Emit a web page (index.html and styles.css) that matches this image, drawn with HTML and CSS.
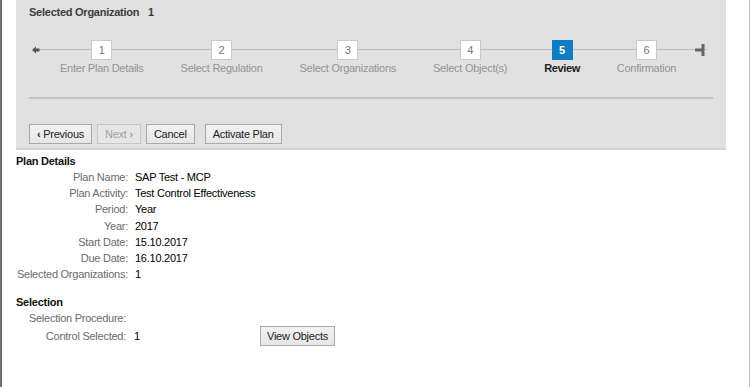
FILE: index.html
```html
<!DOCTYPE html>
<html lang="en">
<head>
    <meta charset="UTF-8">
    <title>Plan Wizard - Review</title>
    <link rel="stylesheet" href="styles.css">
</head>
<body>
    <div class="page">
        <div class="panel">
            <div class="title">Selected Organization <span class="title-count">1</span></div>

            <!-- roadmap -->
            <div class="roadmap">
                <span class="rm-start">
                    <svg width="8" height="8" viewBox="0 0 8 8"><polygon points="0,4 4,0.5 4,2.5 7.5,2.5 7.5,5.5 4,5.5 4,7.5" fill="#555"/></svg>
                </span>
                <ol class="steps">
                    <li class="step"><span class="num">1</span><span class="label">Enter Plan Details</span></li>
                    <li class="step"><span class="num">2</span><span class="label">Select Regulation</span></li>
                    <li class="step"><span class="num">3</span><span class="label">Select Organizations</span></li>
                    <li class="step"><span class="num">4</span><span class="label">Select Object(s)</span></li>
                    <li class="step active"><span class="num">5</span><span class="label">Review</span></li>
                    <li class="step"><span class="num">6</span><span class="label">Confirmation</span></li>
                </ol>
                <span class="rm-end">
                    <svg width="10" height="12" viewBox="0 0 10 12"><rect x="0" y="4.5" width="7" height="3" fill="#666"/><rect x="6.5" y="0" width="3" height="12" fill="#666"/></svg>
                </span>
            </div>

            <div class="separator"></div>

            <div class="toolbar">
                <button class="btn"><b>&#8249;</b> Previous</button>
                <button class="btn" disabled>Next <b>&#8250;</b></button>
                <button class="btn">Cancel</button>
                <button class="btn btn-spaced">Activate Plan</button>
            </div>
        </div>

        <div class="section">
            <div class="section-title">Plan Details</div>
            <div class="details">
                <span class="lbl">Plan Name:</span><span class="val">SAP Test - MCP</span>
                <span class="lbl">Plan Activity:</span><span class="val">Test Control Effectiveness</span>
                <span class="lbl">Period:</span><span class="val">Year</span>
                <span class="lbl">Year:</span><span class="val">2017</span>
                <span class="lbl">Start Date:</span><span class="val">15.10.2017</span>
                <span class="lbl">Due Date:</span><span class="val">16.10.2017</span>
                <span class="lbl">Selected Organizations:</span><span class="val">1</span>
            </div>
        </div>

        <div class="section section-selection">
            <div class="section-title">Selection</div>
            <div class="selection">
                <span class="lbl">Selection Procedure:</span><span class="val"></span><span></span>
                <span class="lbl">Control Selected:</span><span class="val">1</span><span><button class="btn">View Objects</button></span>
            </div>
        </div>
    </div>
</body>
</html>
```

FILE: styles.css
```css
html, body {
    margin: 0;
    padding: 0;
    background: #ffffff;
}

body {
    font-family: "Liberation Sans", Arial, sans-serif;
    font-size: 11px;
    letter-spacing: -0.25px;
    color: #000000;
}

.page {
    width: 747px;
    height: 387px;
    border-left: 2px solid #6f6f6f;
    border-right: 1px solid #bdbdbd;
    box-sizing: content-box;
}

.panel {
    margin-left: 14px;
    width: 710px;
    height: 150px;
    box-sizing: border-box;
    padding: 5px 13px 0 13px;
    background-color: #e1e1e1;
    border-bottom: 2px solid #d2d2d2;
}

.title {
    font-weight: bold;
    color: #3c3c3c;
    line-height: 14px;
}

.title-count {
    margin-left: 6px;
}

/* roadmap */
.roadmap {
    position: relative;
    display: flex;
    align-items: flex-start;
    margin-top: 21px;
}

.roadmap::before {
    content: "";
    position: absolute;
    left: 8px;
    right: 6px;
    top: 9px;
    border-top: 1px solid #bdbdbd;
}

.rm-start {
    position: relative;
    display: flex;
    margin: 6px 0 0 3px;
}

.rm-end {
    position: relative;
    display: flex;
    margin: 4px 0 0 19px;
}

.steps {
    position: relative;
    display: flex;
    gap: 37px;
    list-style: none;
    margin: 0 0 0 20px;
    padding: 0;
}

.step {
    display: flex;
    flex-direction: column;
    align-items: center;
}

.num {
    width: 21px;
    height: 20px;
    box-sizing: border-box;
    border: 1px solid #c9c9c9;
    background: #ffffff;
    color: #777777;
    text-align: center;
    line-height: 18px;
}

.label {
    margin-top: 2px;
    line-height: 13px;
    color: #949494;
    white-space: nowrap;
}

.step.active .num {
    background: #0f7dc2;
    border-color: #0f7dc2;
    color: #ffffff;
    font-weight: bold;
}

.step.active .label {
    color: #222222;
    font-weight: bold;
    letter-spacing: -0.4px;
}

.separator {
    margin-top: 22px;
    border-top: 2px solid #c3c3c3;
}

.toolbar {
    display: flex;
    gap: 5px;
    margin-top: 25px;
}

.btn {
    font-family: inherit;
    font-size: 11px;
    letter-spacing: -0.25px;
    height: 20px;
    padding: 0 7px;
    border: 1px solid #a9a9a9;
    background: linear-gradient(#f2f2f2, #e6e6e6);
    color: #222222;
    cursor: pointer;
}

.btn:disabled {
    color: #a0a0a0;
    border-color: #c6c6c6;
    background: #e6e6e6;
    cursor: default;
}

.btn-spaced {
    margin-left: 5px;
}

/* details */
.section {
    margin-left: 14px;
    margin-top: 3px;
}

.section-selection {
    margin-top: 12px;
}

.section-title {
    font-weight: bold;
    line-height: 16px;
    color: #111111;
}

.details {
    display: grid;
    grid-template-columns: 112px auto;
    column-gap: 7px;
    grid-auto-rows: 16.2px;
    align-items: center;
}

.selection {
    display: grid;
    grid-template-columns: 110px 118px auto;
    column-gap: 8px;
    grid-template-rows: 16px 19px;
    align-items: center;
}

.selection .btn {
    width: 75px;
    padding: 0;
}

.lbl {
    text-align: right;
    color: #6b6b6b;
    white-space: nowrap;
}

.val {
    color: #000000;
    white-space: nowrap;
}
```
